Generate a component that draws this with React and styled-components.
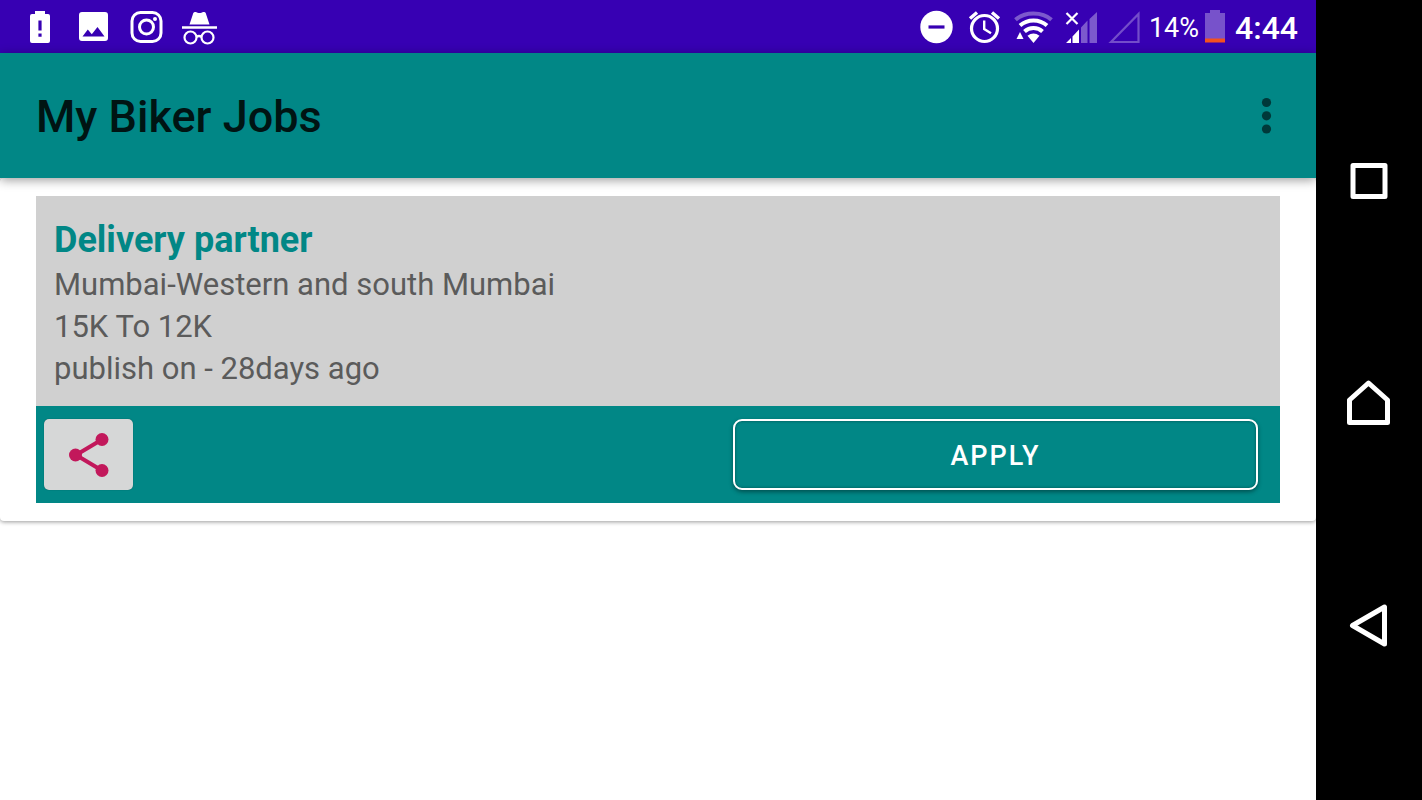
import React from 'react';
import styled, { createGlobalStyle } from 'styled-components';

const GlobalStyle = createGlobalStyle`
  * {
    box-sizing: border-box;
  }

  body {
    margin: 0;
    background-color: #ffffff;
    font-family: Roboto, 'Liberation Sans', sans-serif;
  }

  button {
    margin: 0;
    padding: 0;
    border: 0;
    font-family: inherit;
    cursor: pointer;
  }

  svg {
    display: block;
    overflow: visible;
  }
`;

const Screen = styled.div`
  display: flex;
  min-height: 100vh;
`;

const Main = styled.div`
  flex: 1;
  min-width: 0;
`;

const StatusBar = styled.div`
  display: flex;
  align-items: center;
  justify-content: space-between;
  height: 53px;
  padding: 0 18px 0 20px;
  background-color: #3700b3;
  color: #ffffff;
`;

const StatusGroup = styled.div`
  display: flex;
  align-items: center;
  gap: ${(props) => props.$gap || 0}px;
`;

const StatusIcon = styled.svg`
  width: 40px;
  height: 40px;
`;

const BatteryIcon = styled.svg`
  width: 20px;
  height: 40px;
  margin: 0 10px 0 6px;
`;

const BatteryText = styled.span`
  padding-top: 2px;
  font-size: 27px;
  line-height: 40px;
`;

const Clock = styled.span`
  padding-top: 2px;
  font-size: 32px;
  font-weight: 500;
  line-height: 40px;
`;

const AppBar = styled.header`
  position: relative;
  display: flex;
  align-items: center;
  justify-content: space-between;
  height: 125px;
  padding: 0 30px 0 36px;
  background-color: #018786;
  box-shadow: 0 2px 10px rgba(0, 0, 0, 0.4);
`;

const AppTitle = styled.h1`
  margin: 0;
  padding-top: 2px;
  color: #001413;
  font-size: 45px;
  font-weight: 500;
  line-height: 52px;
`;

const MenuButton = styled.button`
  width: 40px;
  height: 48px;
  background: none;
`;

const Card = styled.article`
  padding: 18px 36px;
  border-radius: 4px;
  background-color: #ffffff;
  box-shadow: 0 1px 4px rgba(0, 0, 0, 0.4);
`;

const Details = styled.div`
  padding: 20px 18px 16px;
  background-color: #d0d0d0;
`;

const JobTitle = styled.h2`
  margin: 0;
  color: #018786;
  font-size: 36px;
  font-weight: 700;
  line-height: 48px;
`;

const JobLine = styled.p`
  margin: 0;
  color: #5b5b5b;
  font-size: 31px;
  line-height: 42px;
`;

const Actions = styled.div`
  display: grid;
  grid-template-columns: 21fr 16fr;
  padding: 13px 22px 13px 8px;
  background-color: #018786;
`;

const ShareButton = styled.button`
  display: flex;
  align-items: center;
  justify-content: center;
  width: 89px;
  height: 71px;
  border-radius: 5px;
  background-color: #d6d7d7;
  box-shadow: 0 0 1px rgba(0, 0, 0, 0.5);
`;

const ApplyButton = styled.button`
  height: 71px;
  padding-top: 2px;
  border: 2px solid #ffffff;
  border-radius: 9px;
  background-color: #018786;
  box-shadow: 0 2px 4px rgba(0, 0, 0, 0.4), inset 0 0 3px rgba(0, 0, 0, 0.4);
  color: #ffffff;
  font-size: 27px;
  font-weight: 500;
  letter-spacing: 2px;
  line-height: 40px;
`;

const NavBar = styled.nav`
  display: flex;
  flex-direction: column;
  align-items: center;
  justify-content: center;
  gap: 178px;
  width: 106px;
  padding-top: 8px;
  background-color: #000000;
`;

const NavButton = styled.button`
  width: 44px;
  height: 44px;
  background: none;
`;

const NavIcon = ({ children }) => (
  <svg
    width="44"
    height="44"
    viewBox="0 0 44 44"
    fill="none"
    stroke="#ffffff"
    strokeWidth="5"
    strokeLinejoin="round"
  >
    {children}
  </svg>
);

const Notifications = () => (
  <StatusGroup $gap={13}>
    <StatusIcon viewBox="0 0 40 40" fill="#ffffff">
      <path
        fillRule="evenodd"
        d="M15 4h10v3h3a2 2 0 0 1 2 2v25a2 2 0 0 1-2 2H12a2 2 0 0 1-2-2V9a2 2 0 0 1 2-2h3zM18.4 13.500v10h3.200v-10zM18.400 26.500v3.200h3.200v-3.200z"
      />
    </StatusIcon>
    <StatusIcon viewBox="0 0 40 40" fill="#ffffff">
      <path
        fillRule="evenodd"
        d="M9 5h23a3 3 0 0 1 3 3v23a3 3 0 0 1-3 3H9a3 3 0 0 1-3-3V8a3 3 0 0 1 3-3zM9.500 29.500h22L24.500 20l-5.700 7.200-4-4.800z"
      />
    </StatusIcon>
    <StatusIcon viewBox="0 0 40 40" fill="none" stroke="#ffffff" strokeWidth="3">
      <rect x="6" y="5.500" width="29" height="29" rx="8.500" />
      <circle cx="20.500" cy="20" r="7" />
      <circle cx="29" cy="12" r="2" fill="#ffffff" stroke="none" />
    </StatusIcon>
    <StatusIcon viewBox="0 0 40 40" fill="#ffffff">
      <path d="M14.300 6q.9-1.600 2.600-.9l1.700.7q1.900.5 3.800 0l1.700-.7q1.800-.7 2.600.9L30.500 17.500h-20zM3 19.300h35v2.400H3z" />
      <g fill="none" stroke="#ffffff" strokeWidth="2.200">
        <circle cx="11.500" cy="30.500" r="6" />
        <circle cx="28.500" cy="30.500" r="6" />
        <path d="M17.500 30q2.500-2 5 0" />
      </g>
    </StatusIcon>
  </StatusGroup>
);

const SystemStatus = () => (
  <StatusGroup>
    <StatusGroup $gap={8}>
      <StatusIcon viewBox="0 0 40 40">
        <circle cx="19.500" cy="20" r="16.200" fill="#ffffff" />
        <path d="M11.500 20h16" stroke="#3700b3" strokeWidth="3.200" />
      </StatusIcon>
      <StatusIcon viewBox="0 0 40 40" fill="none" stroke="#ffffff">
        <circle cx="19.500" cy="21.500" r="13" strokeWidth="3.200" />
        <path d="M19.200 13.500V22l6.800 4.200" strokeWidth="2.400" />
        <path d="M5 11.500l7-6M34 11.500l-7-6" strokeWidth="3.400" />
      </StatusIcon>
      <StatusIcon viewBox="0 0 40 40" fill="none" stroke="#ffffff" strokeWidth="4">
        <path d="M2.500 12.800C12 4.500 29 4.500 38.500 12.800" opacity="0.350" />
        <path d="M7 18.600c7.500-6.800 19.500-6.800 27 0M11.500 24.500c5-4.600 13-4.600 18 0" />
        <path d="M14.500 28.800q6-4.400 12 0L20.500 36z" fill="#ffffff" stroke="none" />
        <path d="M3.500 32L7 25l3.500 7z" fill="#ffffff" stroke="none" />
      </StatusIcon>
      <StatusIcon viewBox="0 0 40 40">
        <g fill="#ffffff">
          <path d="M5 36l5-5v5zM11.500 29.500l6.500-7V36h-6.500z" />
          <path d="M20 20.500l6.500-7V36H20zM28.500 12L36 5v31h-7.500z" opacity="0.350" />
        </g>
        <path d="M5.500 6l11 11M16.500 6l-11 11" stroke="#ffffff" strokeWidth="2.200" />
      </StatusIcon>
      <StatusIcon viewBox="0 0 40 40" fill="none" stroke="#ffffff" strokeWidth="2.200" opacity="0.300">
        <path d="M2 35L29.500 7v28z" />
      </StatusIcon>
    </StatusGroup>
    <BatteryText>14%</BatteryText>
    <BatteryIcon viewBox="0 0 20 40">
      <path d="M5 3h10v3h5v26H0V6h5z" fill="#ffffff" opacity="0.320" />
      <path d="M0 31.500h20v4H0z" fill="#f4511e" />
    </BatteryIcon>
    <Clock>4:44</Clock>
  </StatusGroup>
);

const job = {
  title: 'Delivery partner',
  location: 'Mumbai-Western and south Mumbai',
  salary: '15K To 12K',
  published: 'publish on - 28days ago',
};

const JobCard = ({ title, location, salary, published }) => (
  <Card>
    <Details>
      <JobTitle>{title}</JobTitle>
      <JobLine>{location}</JobLine>
      <JobLine>{salary}</JobLine>
      <JobLine>{published}</JobLine>
    </Details>
    <Actions>
      <ShareButton aria-label="Share">
        <svg width="44" height="48" viewBox="0 0 44 48" fill="#c2185b">
          <path d="M35 8.500L9 24l26 15.500" fill="none" stroke="#c2185b" strokeWidth="4" />
          <circle cx="35" cy="8.500" r="6.500" />
          <circle cx="8.500" cy="24" r="6.500" />
          <circle cx="35" cy="39.500" r="6.500" />
        </svg>
      </ShareButton>
      <ApplyButton>APPLY</ApplyButton>
    </Actions>
  </Card>
);

const App = () => (
  <>
    <GlobalStyle />
    <Screen>
      <Main>
        <StatusBar>
          <Notifications />
          <SystemStatus />
        </StatusBar>
        <AppBar>
          <AppTitle>My Biker Jobs</AppTitle>
          <MenuButton aria-label="More options">
            <svg width="40" height="48" viewBox="0 0 40 48" fill="#00393a">
              <circle cx="20.500" cy="10.500" r="4.600" />
              <circle cx="20.500" cy="23.800" r="4.600" />
              <circle cx="20.500" cy="37" r="4.600" />
            </svg>
          </MenuButton>
        </AppBar>
        <JobCard {...job} />
      </Main>
      <NavBar>
        <NavButton aria-label="Recent apps">
          <NavIcon>
            <rect x="6" y="5.500" width="32" height="31" />
          </NavIcon>
        </NavButton>
        <NavButton aria-label="Home">
          <NavIcon>
            <path d="M2.500 18L21.500 1l19 17v22.500h-38z" />
          </NavIcon>
        </NavButton>
        <NavButton aria-label="Back">
          <NavIcon>
            <path d="M5.500 21.500L37.500 3v37z" />
          </NavIcon>
        </NavButton>
      </NavBar>
    </Screen>
  </>
);

export default App;
